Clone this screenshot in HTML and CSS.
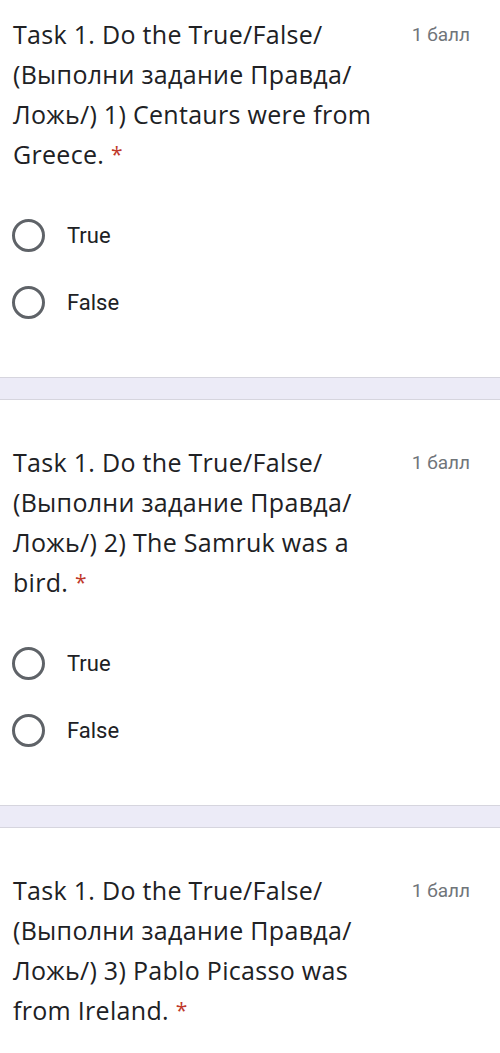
FILE: index.html
```html
<!DOCTYPE html>
<html lang="ru">
<head>
    <meta charset="UTF-8">
    <meta name="viewport" content="width=device-width, initial-scale=1.0">
    <title>Task 1</title>
    <link rel="stylesheet" href="styles.css">
</head>
<body>
   <main class="form">
     <div class="question">
        <div class="question-head">
           <p class="question-title">Task 1. Do the True/False/ (Выполни задание Правда/ Ложь/) 1) Centaurs were from Greece. <span class="req">*</span></p>
           <span class="points">1 балл</span>
        </div>
        <div class="options">
           <label class="option"><span class="radio"></span><span class="option-text">True</span></label>
           <label class="option"><span class="radio"></span><span class="option-text">False</span></label>
        </div>
     </div>
     <div class="gap"></div>
     <div class="question">
        <div class="question-head">
           <p class="question-title">Task 1. Do the True/False/ (Выполни задание Правда/ Ложь/) 2) The Samruk was a bird. <span class="req">*</span></p>
           <span class="points">1 балл</span>
        </div>
        <div class="options">
           <label class="option"><span class="radio"></span><span class="option-text">True</span></label>
           <label class="option"><span class="radio"></span><span class="option-text">False</span></label>
        </div>
     </div>
     <div class="gap"></div>
     <div class="question">
        <div class="question-head">
           <p class="question-title">Task 1. Do the True/False/ (Выполни задание Правда/ Ложь/) 3) Pablo Picasso was from Ireland. <span class="req">*</span></p>
           <span class="points">1 балл</span>
        </div>
        <div class="options">
           <label class="option"><span class="radio"></span><span class="option-text">True</span></label>
           <label class="option"><span class="radio"></span><span class="option-text">False</span></label>
        </div>
     </div>
   </main>
</body>
</html>
```

FILE: styles.css
```css
*{
    margin: 0;
    padding: 0;
    box-sizing: border-box;
}
html, body{
    height: 1053px;
    overflow: hidden;
}
body{
    background-color: #fff;
    font-family: "Open Sans", Roboto, sans-serif;
    color: #202124;
}
.form{
    margin-top: -28px;
}
.question{
    background-color: #fff;
    padding: 42px 30px 51px 13px;
}
.question-head{
    display: flex;
    justify-content: space-between;
    align-items: flex-start;
}
.question-title{
    width: 375px;
    font-size: 25px;
    line-height: 40px;
    letter-spacing: 0.3px;
    color: #202124;
}
.req{
    color: #c0392b;
    font-size: 21px;
    vertical-align: 2px;
}
.points{
    font-family: Roboto, sans-serif;
    font-size: 19px;
    line-height: 42px;
    color: #70757a;
}
.options{
    display: flex;
    flex-direction: column;
    gap: 19px;
    margin-top: 37px;
}
.option{
    display: flex;
    align-items: center;
    height: 48px;
}
.radio{
    width: 33px;
    height: 33px;
    border: 3.5px solid #5f6368;
    border-radius: 50%;
    margin-left: -1px;
    margin-right: 22px;
}
.option-text{
    font-family: Roboto, sans-serif;
    font-size: 22px;
    color: #202124;
}
.gap{
    height: 23px;
    background-color: #ecebf7;
    border-top: 1px solid #d6d5de;
    border-bottom: 1px solid #d6d5de;
}
```
